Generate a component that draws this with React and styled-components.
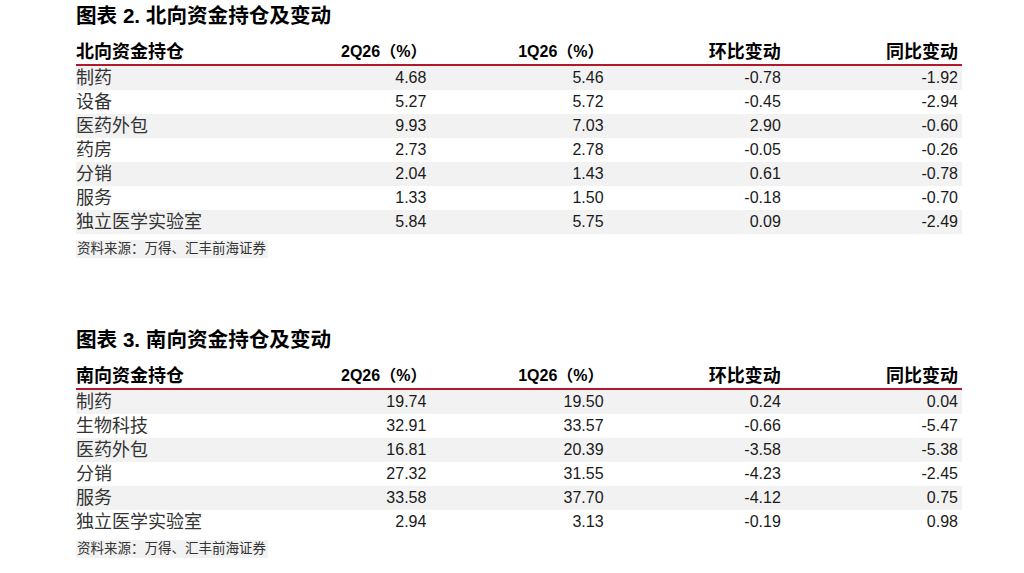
import React from "react";
import styled, { createGlobalStyle } from "styled-components";

const GlobalStyle = createGlobalStyle`
  html, body {
    margin: 0;
    padding: 0;
    background: #ffffff;
  }
  body {
    font-family: "Liberation Sans", "Noto Sans CJK SC", sans-serif;
    color: #1a1a1a;
  }
`;

const northRows = [
  ["制药", "4.68", "5.46", "-0.78", "-1.92"],
  ["设备", "5.27", "5.72", "-0.45", "-2.94"],
  ["医药外包", "9.93", "7.03", "2.90", "-0.60"],
  ["药房", "2.73", "2.78", "-0.05", "-0.26"],
  ["分销", "2.04", "1.43", "0.61", "-0.78"],
  ["服务", "1.33", "1.50", "-0.18", "-0.70"],
  ["独立医学实验室", "5.84", "5.75", "0.09", "-2.49"],
];

const southRows = [
  ["制药", "19.74", "19.50", "0.24", "0.04"],
  ["生物科技", "32.91", "33.57", "-0.66", "-5.47"],
  ["医药外包", "16.81", "20.39", "-3.58", "-5.38"],
  ["分销", "27.32", "31.55", "-4.23", "-2.45"],
  ["服务", "33.58", "37.70", "-4.12", "0.75"],
  ["独立医学实验室", "2.94", "3.13", "-0.19", "0.98"],
];

export default function App() {
  return (
    <>
      <GlobalStyle />
      <Page>
        <HoldingTable
          title="图表 2. 北向资金持仓及变动"
          firstHead="北向资金持仓"
          rows={northRows}
        />
        <HoldingTable
          title="图表 3. 南向资金持仓及变动"
          firstHead="南向资金持仓"
          rows={southRows}
          spaced
        />
      </Page>
    </>
  );
}

function HoldingTable({ title, firstHead, rows, spaced }) {
  return (
    <Section $spaced={spaced}>
      <Title>{title}</Title>
      <Grid>
        <HeadCell $cjk>{firstHead}</HeadCell>
        <HeadCell $right>2Q26（%）</HeadCell>
        <HeadCell $right>1Q26（%）</HeadCell>
        <HeadCell $right $cjk>环比变动</HeadCell>
        <HeadCell $right $cjk>同比变动</HeadCell>
        {rows.map((row, i) =>
          row.map((v, j) => (
            <Cell key={`${i}-${j}`} $shaded={i % 2 === 0} $label={j === 0}>
              {v}
            </Cell>
          ))
        )}
      </Grid>
      <Source>资料来源：万得、汇丰前海证券</Source>
    </Section>
  );
}

const Page = styled.div`
  width: 886px;
  padding: 5px 0 0 76px;
`;

const Section = styled.section`
  display: flex;
  flex-direction: column;
  align-items: flex-start;
  margin-top: ${(p) => (p.$spaced ? "71px" : "0")};
`;

const Title = styled.h2`
  margin: 0 0 13px;
  height: 22px;
  line-height: 22px;
  font-size: 20.6px;
  font-weight: 700;
  color: #000;
`;

const Grid = styled.div`
  display: grid;
  grid-template-columns: repeat(5, 1fr);
  width: 886px;
`;

const HeadCell = styled.div`
  height: 24px;
  line-height: 24px;
  padding-right: 4px;
  border-bottom: 2px solid #b0192c;
  font-size: ${(p) => (p.$cjk ? "18px" : "16px")};
  font-weight: 700;
  color: #000;
  text-align: ${(p) => (p.$right ? "right" : "left")};
  white-space: nowrap;
`;

const Cell = styled.div`
  height: 24px;
  line-height: 24px;
  padding-right: 4px;
  background: ${(p) => (p.$shaded ? "#f2f2f2" : "transparent")};
  font-size: ${(p) => (p.$label ? "18px" : "16px")};
  color: ${(p) => (p.$label ? "#333" : "#1a1a1a")};
  text-align: ${(p) => (p.$label ? "left" : "right")};
  white-space: nowrap;
`;

const Source = styled.div`
  margin-top: 6px;
  height: 18px;
  line-height: 18px;
  padding: 0 2px 0 1px;
  background: #f2f2f2;
  font-size: 13.5px;
  color: #333;
`;
